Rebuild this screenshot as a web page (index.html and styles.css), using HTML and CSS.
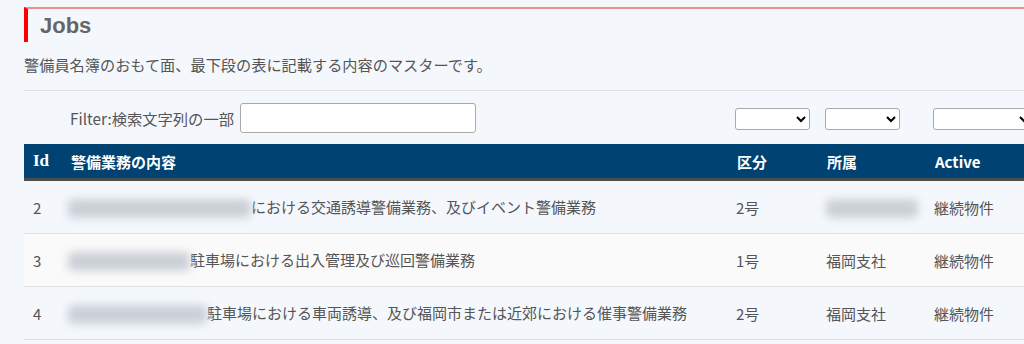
FILE: index.html
```html
<!DOCTYPE html>
<html lang="ja">
<head>
    <meta charset="UTF-8">
    <meta name="viewport" content="width=device-width, initial-scale=1.0">
    <title>Jobs</title>
    <link rel="stylesheet" href="styles.css">
</head>
<body>

    <div id="page">
        <!-- 見出し -->
        <h1 class="page-title">Jobs</h1>
        <p class="page-desc">警備員名簿のおもて面、最下段の表に記載する内容のマスターです。</p>

        <!-- フィルター -->
        <div class="filter-row">
            <div></div>
            <div class="filter-text">
                <label for="filter">Filter:検索文字列の一部</label>
                <input type="text" id="filter">
            </div>
            <div class="filter-cell"><select class="filter-select"></select></div>
            <div class="filter-cell"><select class="filter-select"></select></div>
            <div class="filter-cell"><select class="filter-select wide"></select></div>
        </div>

        <!-- 一覧表 -->
        <table class="jobs-table">
            <colgroup>
                <col class="col-id">
                <col class="col-content">
                <col class="col-kind">
                <col class="col-branch">
                <col class="col-active">
            </colgroup>
            <thead>
                <tr>
                    <th class="th-id">Id</th>
                    <th>警備業務の内容</th>
                    <th>区分</th>
                    <th>所属</th>
                    <th>Active</th>
                </tr>
            </thead>
            <tbody>
                <tr>
                    <td>2</td>
                    <td><span class="masked" style="width: 183px"></span>における交通誘導警備業務、及びイベント警備業務</td>
                    <td>2号</td>
                    <td><span class="masked" style="width: 92px"></span></td>
                    <td>継続物件</td>
                </tr>
                <tr>
                    <td>3</td>
                    <td><span class="masked" style="width: 122px"></span>駐車場における出入管理及び巡回警備業務</td>
                    <td>1号</td>
                    <td>福岡支社</td>
                    <td>継続物件</td>
                </tr>
                <tr>
                    <td>4</td>
                    <td><span class="masked" style="width: 139px"></span>駐車場における車両誘導、及び福岡市または近郊における催事警備業務</td>
                    <td>2号</td>
                    <td>福岡支社</td>
                    <td>継続物件</td>
                </tr>
            </tbody>
        </table>
    </div>

</body>
</html>
```

FILE: styles.css
```css
/* 全体のスタイル */
body {
    margin: 0;
    background-color: #f4f8fd;
    font-family: 'Noto Sans CJK JP', sans-serif;
    color: #555;
    overflow: hidden;
}

#page {
    width: 1040px;
    padding: 7px 0 0 24px;
}

/* 見出し */
.page-title {
    margin: 0;
    height: 33px;
    line-height: 33px;
    padding-left: 12px;
    border-top: 2px solid #f58a8e;
    border-left: 4px solid #f00;
    font-family: 'Liberation Sans', Arial, sans-serif;
    font-size: 22px;
    font-weight: bold;
    color: #666;
}

.page-desc {
    margin: 0;
    padding: 12px 0 16px;
    font-size: 15.2px;
    line-height: 20px;
    border-bottom: 1px solid #dde1e6;
}

/* フィルター行 */
.filter-row {
    display: grid;
    grid-template-columns: 37px 666px 90px 108px 139px;
    align-items: center;
    height: 53px;
}

.filter-text {
    display: flex;
    align-items: center;
    gap: 6px;
    padding-left: 9px;
    font-size: 15.3px;
}

#filter {
    width: 236px;
    height: 30px;
    box-sizing: border-box;
    border: 1px solid #a9a9a9;
    border-radius: 3px;
    background: #fff;
}

.filter-cell {
    padding-left: 8px;
}

.filter-select {
    width: 75px;
    height: 22px;
    border: 1px solid #a9a9a9;
    border-radius: 3px;
    background: #fff;
}
.filter-select.wide {
    width: 100px;
}

/* 一覧表 */
.jobs-table {
    margin-top: 0;
    width: 1040px;
    table-layout: fixed;
    border-collapse: collapse;
    font-size: 15px;
}

.col-id { width: 37px; }
.col-content { width: 666px; }
.col-kind { width: 90px; }
.col-branch { width: 108px; }

.jobs-table th {
    height: 34px;
    padding: 0 10px;
    text-align: left;
    background-color: #004272;
    color: #fff;
    font-weight: bold;
    border-bottom: 3px solid #4d4d4d;
}
.jobs-table .th-id {
    padding-left: 9px;
    font-family: 'Liberation Serif', serif;
    font-size: 17px;
}

.jobs-table td {
    height: 52px;
    padding: 0 9px;
    border-bottom: 1px solid #dedfe2;
    white-space: nowrap;
    color: #555;
}
.jobs-table td:nth-child(2) {
    padding-left: 7px;
}
.jobs-table tbody tr:nth-child(even) {
    background-color: #fafafa;
}

/* 伏せ字部分 */
.masked {
    display: inline-block;
    height: 19px;
    vertical-align: middle;
    background-color: #cbd0d7;
    border-radius: 5px;
    filter: blur(4px);
}
```
